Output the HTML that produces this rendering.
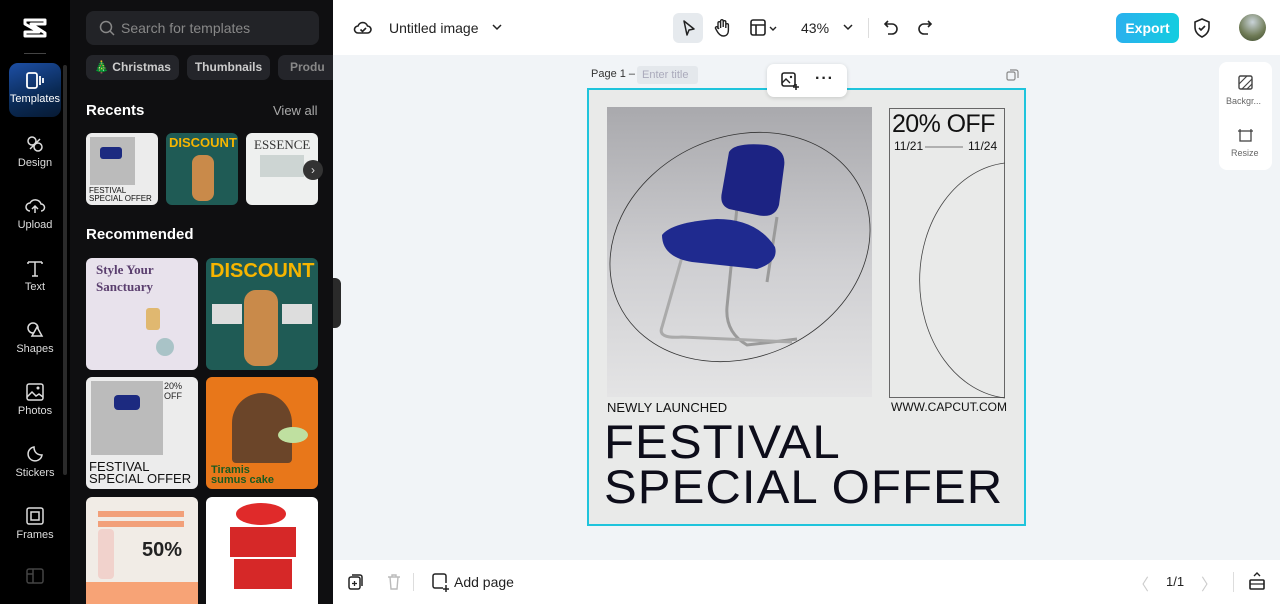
<!DOCTYPE html>
<html><head><meta charset="utf-8"><style>
*{margin:0;padding:0;box-sizing:border-box}
html,body{width:1280px;height:604px;overflow:hidden}
body{font-family:"Liberation Sans",sans-serif;background:#f1f4f7;position:relative}
.a{position:absolute}
.rail{left:0;top:0;width:70px;height:604px;background:#000}
.ri{position:absolute;left:0;width:70px;text-align:center;color:#ddd;font-size:11px}
.ri svg{display:block;margin:0 auto 3px}
.panel{left:70px;top:0;width:263px;height:604px;background:#0f0f11;overflow:hidden}
.chip{position:absolute;top:55px;height:25px;background:#24252a;border-radius:7px;color:#ccc;font-size:12px;font-weight:bold;line-height:25px;text-align:center;white-space:nowrap;overflow:hidden}
.th{position:absolute;border-radius:6px;overflow:hidden}
.top{left:333px;top:0;width:947px;height:55px;background:#fff}
.bot{left:333px;top:560px;width:947px;height:44px;background:#fff}
svg{overflow:visible}
</style></head><body>
<div class="a rail">
 <svg class="a" style="left:23px;top:17px" width="24" height="22" viewBox="0 0 24 22"><path d="M2 3 L22 3 L22 7 L8 7 L22 16 L22 19 L2 19 L2 15 L16 15 L2 7Z" fill="none" stroke="#fff" stroke-width="3" stroke-linejoin="round"/></svg>
 <div class="a" style="left:24px;top:53px;width:22px;height:1px;background:#444"></div>
 <div class="a" style="left:9px;top:63px;width:52px;height:54px;border-radius:9px;background:linear-gradient(160deg,#1d4fa5,#0a2a55 60%,#071a33)"></div>
 <div class="ri" style="top:72px;color:#fff"><svg width="20" height="18"><rect x="2" y="1" width="10" height="15" rx="2" fill="none" stroke="#fff" stroke-width="1.8"/><path d="M15 4v9M18 6v5" stroke="#fff" stroke-width="1.8"/></svg>Templates</div>
 <div class="ri" style="top:134px"><svg width="20" height="20"><circle cx="7" cy="7" r="4" fill="none" stroke="#ddd" stroke-width="1.5"/><circle cx="13" cy="13" r="4" fill="none" stroke="#ddd" stroke-width="1.5"/><path d="M5 15L15 5" stroke="#ddd" stroke-width="1.5"/></svg>Design</div>
 <div class="ri" style="top:196px"><svg width="20" height="20"><path d="M5 15a4 4 0 010-8 6 6 0 0111 1 3.5 3.5 0 010 7" fill="none" stroke="#ddd" stroke-width="1.5"/><path d="M10 17v-7M7 13l3-3 3 3" fill="none" stroke="#ddd" stroke-width="1.5"/></svg>Upload</div>
 <div class="ri" style="top:258px"><svg width="20" height="20"><path d="M3 4h14M10 4v14M3 4v2M17 4v2M7 18h6" stroke="#ddd" stroke-width="1.5" fill="none"/></svg>Text</div>
 <div class="ri" style="top:320px"><svg width="20" height="20"><circle cx="8" cy="8" r="5" fill="none" stroke="#ddd" stroke-width="1.5"/><path d="M12 7l5 9H7z" fill="#000" stroke="#ddd" stroke-width="1.5"/></svg>Shapes</div>
 <div class="ri" style="top:382px"><svg width="20" height="20"><rect x="2" y="2" width="16" height="16" rx="2" fill="none" stroke="#ddd" stroke-width="1.5"/><path d="M2 15l5-5 4 4 3-2 4 3" fill="none" stroke="#ddd" stroke-width="1.5"/><circle cx="13" cy="6" r="1.5" fill="#ddd"/></svg>Photos</div>
 <div class="ri" style="top:444px"><svg width="20" height="20"><path d="M17 11a7 7 0 11-8-8c0 5 3 8 8 8z" fill="none" stroke="#ddd" stroke-width="1.5"/></svg>Stickers</div>
 <div class="ri" style="top:506px"><svg width="20" height="20"><rect x="2" y="2" width="16" height="16" rx="2" fill="none" stroke="#ddd" stroke-width="1.5"/><rect x="6" y="6" width="8" height="8" fill="none" stroke="#ddd" stroke-width="1.5"/></svg>Frames</div>
 <svg class="a" style="left:26px;top:568px" width="18" height="16"><rect x="1" y="1" width="16" height="14" rx="2" fill="none" stroke="#444" stroke-width="1.5"/><path d="M7 1v14M1 6h6" stroke="#444" stroke-width="1.5"/></svg>
 <div class="a" style="left:63px;top:65px;width:4px;height:410px;border-radius:2px;background:#2a2a2a"></div>
</div>
<div class="a panel">
 <div class="a" style="left:16px;top:11px;width:233px;height:34px;border-radius:8px;background:#222327"></div>
 <svg class="a" style="left:29px;top:20px" width="16" height="16"><circle cx="7" cy="7" r="5.5" fill="none" stroke="#888" stroke-width="1.5"/><path d="M11 11l4 4" stroke="#888" stroke-width="1.5"/></svg>
 <div class="a" style="left:51px;top:20px;color:#888;font-size:14px">Search for templates</div>
 <div class="chip" style="left:16px;width:93px">🎄 Christmas</div>
 <div class="chip" style="left:117px;width:83px">Thumbnails</div>
 <div class="chip" style="left:208px;width:55px;border-radius:7px 0 0 7px;color:#888;text-align:left;padding-left:12px">Produ</div>
 <div class="a" style="left:16px;top:102px;color:#fff;font-size:15px;font-weight:bold">Recents</div>
 <div class="a" style="left:203px;top:103px;color:#aaa;font-size:13px">View all</div>
 <div class="th" style="left:16px;top:133px;width:72px;height:72px;background:#ececec"><div class="a" style="left:4px;top:4px;width:45px;height:48px;background:#bbb"></div><div class="a" style="left:14px;top:14px;width:22px;height:12px;background:#1c2a80;border-radius:3px"></div><div class="a" style="left:3px;top:54px;font-size:8px;line-height:8px;color:#111">FESTIVAL<br>SPECIAL OFFER</div></div>
 <div class="th" style="left:96px;top:133px;width:72px;height:72px;background:#1f5b55"><div class="a" style="left:3px;top:2px;color:#f7b500;font-size:13px;font-weight:bold">DISCOUNT</div><div class="a" style="left:26px;top:22px;width:22px;height:46px;background:#c98a4a;border-radius:8px"></div></div>
 <div class="th" style="left:176px;top:133px;width:72px;height:72px;background:#eef0ef"><div class="a" style="left:8px;top:4px;font-family:'Liberation Serif',serif;font-size:13px;color:#333">ESSENCE</div><div class="a" style="left:14px;top:22px;width:44px;height:22px;background:#cdd5d3"></div></div>
 <div class="a" style="left:233px;top:160px;width:20px;height:20px;border-radius:50%;background:#333;color:#ddd;font-size:12px;text-align:center;line-height:20px">›</div>
 <div class="a" style="left:16px;top:226px;color:#fff;font-size:15px;font-weight:bold">Recommended</div>
 <div class="th" style="left:16px;top:258px;width:112px;height:112px;background:#e8e2ec"><div class="a" style="left:10px;top:3px;font-family:'Liberation Serif',serif;font-size:13px;line-height:17px;color:#5a3e6e;font-weight:bold">Style Your<br>Sanctuary</div><div class="a" style="left:60px;top:50px;width:14px;height:22px;background:#e0b870;border-radius:3px"></div><div class="a" style="left:70px;top:80px;width:18px;height:18px;border-radius:50%;background:#a9c3c7"></div></div>
 <div class="th" style="left:136px;top:258px;width:112px;height:112px;background:#1f5b55"><div class="a" style="left:4px;top:2px;color:#f7b500;font-size:20px;font-weight:bold">DISCOUNT</div><div class="a" style="left:38px;top:32px;width:34px;height:76px;background:#c98a4a;border-radius:12px"></div><div class="a" style="left:6px;top:46px;width:30px;height:20px;background:#ddd"></div><div class="a" style="left:76px;top:46px;width:30px;height:20px;background:#ddd"></div></div>
 <div class="th" style="left:16px;top:377px;width:112px;height:112px;background:#ececec"><div class="a" style="left:5px;top:4px;width:72px;height:74px;background:#bbb"></div><div class="a" style="left:28px;top:18px;width:26px;height:15px;background:#1c2a80;border-radius:4px"></div><div class="a" style="left:3px;top:84px;font-size:13px;line-height:12px;color:#111">FESTIVAL<br>SPECIAL OFFER</div><div class="a" style="left:78px;top:4px;font-size:9px;color:#222">20% OFF</div></div>
 <div class="th" style="left:136px;top:377px;width:112px;height:112px;background:#e8771a"><div class="a" style="left:26px;top:16px;width:60px;height:70px;border-radius:30px 30px 4px 4px;background:#6b4529"></div><div class="a" style="left:72px;top:50px;width:30px;height:16px;border-radius:50%;background:#bfe0a0"></div><div class="a" style="left:5px;top:88px;font-size:11px;line-height:10px;font-weight:bold;color:#1a5a20">Tiramis<br>sumus cake</div></div>
 <div class="th" style="left:16px;top:497px;width:112px;height:120px;background:#f1ece6"><div class="a" style="left:12px;top:14px;width:86px;height:6px;background:#f2a07a"></div><div class="a" style="left:12px;top:24px;width:86px;height:6px;background:#f2a07a"></div><div class="a" style="left:12px;top:32px;width:16px;height:50px;background:#f1d2cc;border-radius:4px"></div><div class="a" style="left:56px;top:42px;font-size:20px;font-weight:bold;color:#222">50%</div><div class="a" style="left:0;top:85px;width:112px;height:30px;background:#f7a376"></div></div>
 <div class="th" style="left:136px;top:497px;width:112px;height:120px;background:#fff"><div class="a" style="left:30px;top:6px;width:50px;height:22px;border-radius:50%;background:#e02a2a"></div><div class="a" style="left:24px;top:30px;width:66px;height:30px;background:#d62828"></div><div class="a" style="left:28px;top:62px;width:58px;height:30px;background:#d62828"></div></div>
</div>
<div class="a" style="left:333px;top:278px;width:8px;height:50px;background:#2a2a2a;border-radius:0 6px 6px 0"></div>
<div class="a top">
 <svg class="a" style="left:21px;top:19px" width="18" height="18"><path d="M4 14a3.5 3.5 0 010-7 5 5 0 019.5 0 3.5 3.5 0 010 7z" fill="none" stroke="#222" stroke-width="1.6"/><path d="M6.5 10.5l2 2 3.5-3.5" fill="none" stroke="#222" stroke-width="1.6"/></svg>
 <div class="a" style="left:56px;top:20px;font-size:14px;color:#222">Untitled image</div>
 <svg class="a" style="left:159px;top:24px" width="10" height="8"><path d="M1 1l4 4 4-4" fill="none" stroke="#222" stroke-width="1.5"/></svg>
 <div class="a" style="left:340px;top:13px;width:30px;height:30px;border-radius:6px;background:#e6eaee"></div>
 <svg class="a" style="left:348px;top:19px" width="16" height="18"><path d="M3 2l10 8-5 1-2 5z" fill="none" stroke="#222" stroke-width="1.5" stroke-linejoin="round"/></svg>
 <svg class="a" style="left:380px;top:18px" width="18" height="20"><path d="M5 11V5a1.3 1.3 0 012.6 0v5M7.6 9V3a1.3 1.3 0 012.6 0v6M10.2 9V4a1.3 1.3 0 012.6 0v6M12.8 10V7a1.3 1.3 0 012.6 0v5c0 4-2 6-5 6s-5-2-7-6l-1-2a1.2 1.2 0 012-1l1.6 2" fill="none" stroke="#222" stroke-width="1.4"/></svg>
 <svg class="a" style="left:417px;top:19px" width="30" height="18"><rect x="1" y="1" width="14" height="15" rx="2" fill="none" stroke="#222" stroke-width="1.6"/><path d="M1 6h14M6 6v10" stroke="#222" stroke-width="1.6"/><path d="M20 8l3 3 3-3" fill="none" stroke="#222" stroke-width="1.4"/></svg>
 <div class="a" style="left:468px;top:20px;font-size:14px;color:#222">43%</div>
 <svg class="a" style="left:510px;top:24px" width="10" height="8"><path d="M1 1l4 4 4-4" fill="none" stroke="#222" stroke-width="1.5"/></svg>
 <div class="a" style="left:535px;top:18px;width:1px;height:20px;background:#ddd"></div>
 <svg class="a" style="left:550px;top:19px" width="16" height="18"><path d="M5 2L2 5l3 3M2 5h7a5 5 0 010 10H5" fill="none" stroke="#222" stroke-width="1.6"/></svg>
 <svg class="a" style="left:584px;top:19px" width="16" height="18"><path d="M11 2l3 3-3 3M14 5H7a5 5 0 000 10h4" fill="none" stroke="#222" stroke-width="1.6"/></svg>
 <div class="a" style="left:783px;top:13px;width:63px;height:30px;border-radius:7px;background:linear-gradient(90deg,#2ab0ee,#13cde0);color:#fff;font-size:14px;font-weight:bold;text-align:center;line-height:30px">Export</div>
 <svg class="a" style="left:860px;top:18px" width="18" height="20"><path d="M9 1l7 3v5c0 5-3 8-7 10-4-2-7-5-7-10V4z" fill="none" stroke="#222" stroke-width="1.6"/><path d="M6 10l2 2 4-4" fill="none" stroke="#222" stroke-width="1.6"/></svg>
 <div class="a" style="left:906px;top:14px;width:27px;height:27px;border-radius:50%;background:radial-gradient(circle at 50% 30%,#c9d3d8,#6e7a55 60%,#3d4a30)"></div>
</div>
<div class="a" style="left:591px;top:68px;font-size:11px;color:#333">Page 1 –</div>
<div class="a" style="left:637px;top:66px;width:61px;height:18px;background:#e4e8ec;border-radius:3px;font-size:11px;color:#aab;line-height:18px;padding-left:5px">Enter title</div>
<svg class="a" style="left:1006px;top:68px" width="13" height="13"><rect x="1" y="4" width="8" height="8" rx="1.5" fill="none" stroke="#888" stroke-width="1.2"/><path d="M4 2h6a2 2 0 012 2v6" fill="none" stroke="#888" stroke-width="1.2"/></svg>
<div class="a" style="left:587px;top:88px;width:439px;height:438px;border:2px solid #1fc4dc;background:#e9eae9"></div>
<div class="a" style="left:767px;top:64px;width:80px;height:33px;background:#fff;border-radius:7px;box-shadow:0 1px 4px rgba(0,0,0,.15)"></div>
<svg class="a" style="left:781px;top:72px" width="18" height="18"><rect x="1" y="1" width="13" height="13" rx="2" fill="none" stroke="#222" stroke-width="1.6"/><path d="M1 11l4-4 4 4" fill="none" stroke="#222" stroke-width="1.4"/><circle cx="10" cy="5" r="1.2" fill="#222"/><path d="M15 12v6M12 15h6" stroke="#222" stroke-width="1.6"/></svg>
<div class="a" style="left:815px;top:70px;font-size:16px;font-weight:bold;color:#222;letter-spacing:1px">···</div>
<div class="a" style="left:607px;top:107px;width:265px;height:290px;background:linear-gradient(180deg,#a9a9ad 0%,#cfcfd2 55%,#e4e4e5 100%)"></div>
<svg class="a" style="left:607px;top:107px" width="265" height="290">
 <ellipse cx="133" cy="140" rx="134" ry="110" transform="rotate(-25 133 140)" fill="none" stroke="#333" stroke-width="0.8"/>
 <path d="M130 100 L120 200 Q118 225 140 238 L190 232 M170 110 L160 175" fill="none" stroke="#9a9a9a" stroke-width="3"/>
 <path d="M75 150 L55 220 Q50 232 75 230 L185 235" fill="none" stroke="#aaa" stroke-width="3"/>
 <path d="M122 45 Q128 35 160 38 Q180 42 177 60 L172 98 Q168 112 150 108 L122 102 Q112 98 115 85Z" fill="#1c2383"/>
 <path d="M55 128 Q65 115 110 112 Q150 112 168 140 Q172 155 150 162 L85 155 Q55 150 55 128Z" fill="#1f2a8f"/>
</svg>
<div class="a" style="left:889px;top:108px;width:116px;height:290px;border:1px solid #666"></div>
<svg class="a" style="left:889px;top:108px" width="116" height="290"><path d="M116 55 A94 118 0 0 0 116 290" fill="none" stroke="#444" stroke-width="0.8"/><path d="M36 39h38" stroke="#777" stroke-width="1"/></svg>
<div class="a" style="left:892px;top:110px;font-size:25px;color:#111;letter-spacing:-0.6px">20% OFF</div>
<div class="a" style="left:894px;top:139px;font-size:12px;color:#111">11/21</div>
<div class="a" style="left:968px;top:139px;font-size:12px;color:#111">11/24</div>
<div class="a" style="left:607px;top:400px;font-size:13px;color:#111">NEWLY LAUNCHED</div>
<div class="a" style="left:891px;top:400px;font-size:12px;color:#111">WWW.CAPCUT.COM</div>
<div class="a" style="left:604px;top:419px;font-size:47px;line-height:45px;color:#0d0d1a;letter-spacing:1px;transform:scaleX(1.045);transform-origin:left">FESTIVAL<br>SPECIAL OFFER</div>
<div class="a" style="left:1219px;top:62px;width:53px;height:108px;background:#fff;border-radius:8px"></div>
<svg class="a" style="left:1238px;top:75px" width="15" height="15"><rect x="1" y="1" width="13" height="13" rx="1.5" fill="none" stroke="#444" stroke-width="1.4"/><path d="M1 9L9 1M4 14L14 4M9 14l5-5" stroke="#444" stroke-width="1.2"/></svg>
<div class="a" style="left:1226px;top:96px;font-size:9px;color:#666">Backgr...</div>
<svg class="a" style="left:1238px;top:128px" width="15" height="15"><rect x="2" y="3" width="11" height="10" fill="none" stroke="#444" stroke-width="1.3"/><path d="M2 1v3M13 1v3M0 3h3M12 3h3" stroke="#444" stroke-width="1.2"/></svg>
<div class="a" style="left:1231px;top:148px;font-size:9px;color:#666">Resize</div>
<div class="a bot">
 <svg class="a" style="left:15px;top:13px" width="16" height="18"><rect x="1" y="4" width="11" height="12" rx="2" fill="none" stroke="#222" stroke-width="1.5"/><path d="M4 2h8a2 2 0 012 2v9" fill="none" stroke="#222" stroke-width="1.5"/><path d="M6.5 8v5M4 10.5h5" stroke="#222" stroke-width="1.3"/></svg>
 <svg class="a" style="left:54px;top:13px" width="14" height="18"><path d="M1 4h12M5 4V2h4v2M3 4l1 12h6l1-12" fill="none" stroke="#bbb" stroke-width="1.4"/></svg>
 <div class="a" style="left:80px;top:13px;width:1px;height:18px;background:#ddd"></div>
 <svg class="a" style="left:99px;top:13px" width="18" height="20"><path d="M11 15H3a2 2 0 01-2-2V3a2 2 0 012-2h9a2 2 0 012 2v7" fill="none" stroke="#222" stroke-width="1.5"/><path d="M14 12v7M11 16h6" stroke="#222" stroke-width="1.5"/></svg>
 <div class="a" style="left:121px;top:14px;font-size:14px;color:#222">Add page</div>
 <div class="a" style="left:800px;top:11px;font-size:16px;color:#ccc">〈</div>
 <div class="a" style="left:833px;top:14px;font-size:13px;color:#222">1/1</div>
 <div class="a" style="left:868px;top:11px;font-size:16px;color:#ccc">〉</div>
 <div class="a" style="left:900px;top:12px;width:1px;height:20px;background:#ddd"></div>
 <svg class="a" style="left:916px;top:12px" width="16" height="18"><path d="M5 4l3-3 3 3" fill="none" stroke="#222" stroke-width="1.4"/><rect x="1" y="8" width="14" height="9" rx="1" fill="none" stroke="#222" stroke-width="1.6"/><path d="M1 12h14" stroke="#222" stroke-width="1.2"/></svg>
</div>
</body></html>
